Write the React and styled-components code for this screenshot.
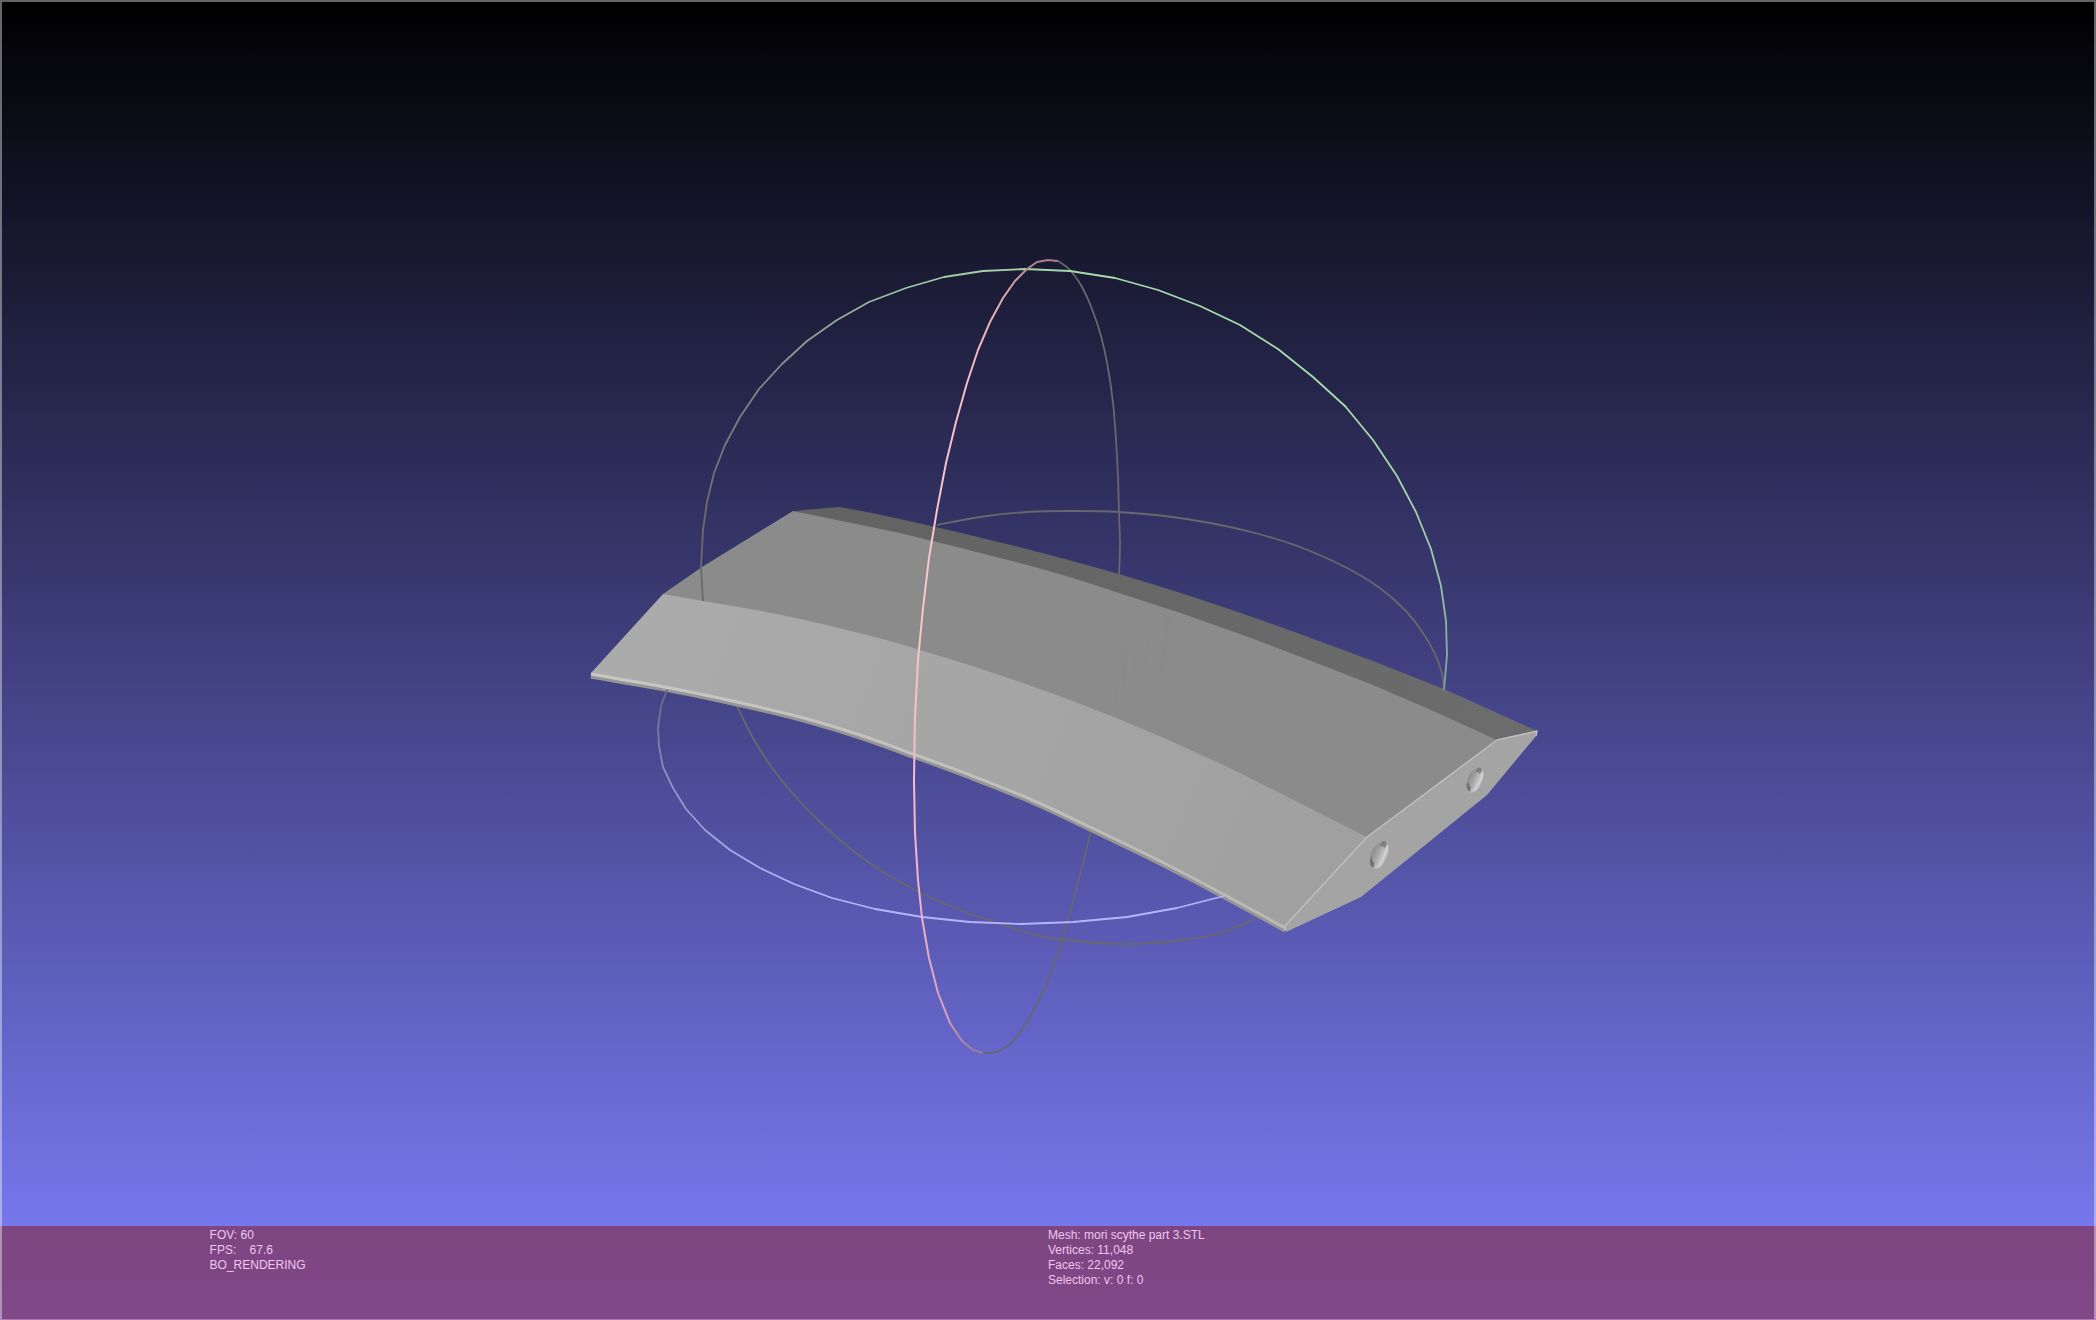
import React from 'react';
import styled, { createGlobalStyle } from 'styled-components';

const colors = {
  skyTop: '#000000',
  skyBottom: '#8080ff',
  barTop: '#7d4680',
  barBottom: '#804888',
  barText: '#f0c6f0',
  back: '#67676f',
};

const fonts = {
  sans: '"Liberation Sans", Arial, sans-serif',
};

const GlobalStyle = createGlobalStyle`
  * {
    box-sizing: border-box;
  }

  body {
    margin: 0;
    background: ${colors.skyTop};
    font-family: ${fonts.sans};
  }
`;

const Viewer = styled.main`
  position: relative;
  display: flex;
  flex-direction: column;
  min-height: 100vh;
  background: linear-gradient(${colors.skyTop}, ${colors.skyBottom});

  /* window edge, lies over the scene and the info bar */
  &::after {
    content: '';
    position: absolute;
    inset: 0;
    border: 2px solid rgba(255, 255, 255, 0.4);
    border-bottom: 1px solid rgba(255, 255, 255, 0.3);
    pointer-events: none;
  }
`;

const Scene = styled.div`
  display: flex;
  flex: 1;
  min-height: 0;
`;

const Canvas = styled.svg`
  display: block;
  flex: 1;
  width: 100%;
`;

const InfoBar = styled.footer`
  display: grid;
  grid-template-columns: 4fr 5fr;
  min-height: 94px;
  padding: 2px 0 0 10%;
  background: linear-gradient(${colors.barTop}, ${colors.barBottom});
  color: ${colors.barText};
  font-size: 12px;
  line-height: 15px;
`;

const InfoLine = styled.div`
  white-space: pre;
`;

const Line = styled.path`
  fill: none;
  stroke: ${props => props.stroke || colors.back};
  stroke-width: ${props => props.strokeWidth || 1.8};
  stroke-linejoin: round;
`;

const renderInfo = ['FOV: 60', 'FPS:    67.6', 'BO_RENDERING'];

const meshInfo = [
  'Mesh: mori scythe part 3.STL',
  'Vertices: 11,048',
  'Faces: 22,092',
  'Selection: v: 0 f: 0',
];

// smooth curve through all points (Catmull-Rom written as cubic beziers)
const smooth = points => {
  const p = points.split(' ').map(pair => pair.split(',').map(Number));
  let d = `M${p[0].join(' ')}`;
  for (let i = 0; i < p.length - 1; i++) {
    const before = p[i - 1] || p[i];
    const after = p[i + 2] || p[i + 1];
    const c1 = [0, 1].map(k => p[i][k] + (p[i + 1][k] - before[k]) / 6);
    const c2 = [0, 1].map(k => p[i + 1][k] - (after[k] - p[i][k]) / 6);
    d += ` C${c1.join(' ')} ${c2.join(' ')} ${p[i + 1].join(' ')}`;
  }
  return d;
};

const segments = points => `M${points.split(' ').join(' L')}`;

// halves of the trackball that turn away from the camera
const backRings = [
  '1058,261 1070,270 1082,287 1092,309 1101,336 1108,368 1113,403 1116,440 1118,477 1119,513 1120,545 1119,576',
  '937,525 980,517 1027,512 1073,511 1119,512 1165,516 1210,523 1255,533 1300,547 1345,567 1377,586 1402,607 1421,630 1435,654 1442,674 1444,690',
  '734,700 753,738 773,769 795,796 820,822 847,846 880,870 915,890 957,909 1000,924 1040,936 1085,942 1123,944 1153,943 1190,939 1223,932 1256,918',
  '983,1053 992,1053 1001,1050 1014,1040 1028,1020 1042,994 1053,967 1061,943 1068,920 1075,893 1083,863 1092,826',
];

const greenRing =
  '703,601 701,567 703,530 707,502 714,473 725,445 740,417 759,389 782,364 807,341 837,320 869,302 906,288 944,277 983,271 1025,269 1070,271 1115,278 1158,290 1200,306 1240,325 1278,349 1313,377 1346,407';

const greenTail = '1345,406 1373,440 1397,476 1416,512 1431,549 1441,586 1446,621 1447,655 1444,690';

const blueRing =
  '667,690 661,706 658,728 659,746 663,767 673,788 686,809 705,830 730,850 760,868 794,884 832,898 875,909 922,917 970,922 1021,924 1073,922 1127,917 1177,908 1224,896';

const redRing =
  '1058,261 1048,260 1037,262 1027,269 1015,281 1003,298 990,322 978,350 967,383 956,422 946,463 937,510 929,558 923,608 918,660 915,717 914,780 915,833 918,880 922,918 929,958 938,993 950,1023 962,1041 973,1050 983,1053';

const bladeEdge =
  '591,676 670,690 737,704 800,719 860,737 913,756 970,777 1030,801 1090,829 1160,863 1223,896 1285,930';

const bladeHighlight =
  '591,674 670,688 737,702 800,717 860,735 913,754 970,775 1030,799 1090,827 1160,861 1223,894 1285,928';

const Gradients = () => (
  <defs>
    <linearGradient id="green" gradientUnits="userSpaceOnUse" x1="701" y1="600" x2="1100" y2="270">
      <stop offset="0.1" stopColor="#6a6a6c" />
      <stop offset="0.4" stopColor="#858e8c" />
      <stop offset="0.7" stopColor="#9cc8a4" />
      <stop offset="1" stopColor="#a6dcac" />
    </linearGradient>
    <linearGradient id="greenFade" gradientUnits="userSpaceOnUse" x1="0" y1="410" x2="0" y2="690">
      <stop offset="0" stopColor="#a6dcac" />
      <stop offset="0.5" stopColor="#a0ccac" />
      <stop offset="1" stopColor="#80a09c" />
    </linearGradient>
    <linearGradient id="blue" gradientUnits="userSpaceOnUse" x1="0" y1="690" x2="0" y2="890">
      <stop offset="0" stopColor="#6a6a78" />
      <stop offset="0.4" stopColor="#8c8cbc" />
      <stop offset="1" stopColor="#b4b4ff" />
    </linearGradient>
    <linearGradient id="red" gradientUnits="userSpaceOnUse" x1="0" y1="258" x2="0" y2="1056">
      <stop offset="0" stopColor="#a47c86" />
      <stop offset="0.04" stopColor="#dca8ae" />
      <stop offset="0.15" stopColor="#f4bcc4" />
      <stop offset="0.4" stopColor="#fac8cc" />
      <stop offset="0.8" stopColor="#f4b4c8" />
      <stop offset="0.95" stopColor="#d8a0b4" />
      <stop offset="1" stopColor="#8c7c98" />
    </linearGradient>
    <linearGradient id="bevel" gradientUnits="userSpaceOnUse" x1="640" y1="620" x2="1300" y2="890">
      <stop offset="0" stopColor="#ababab" />
      <stop offset="1" stopColor="#a0a0a0" />
    </linearGradient>
    <linearGradient id="spine" gradientUnits="userSpaceOnUse" x1="800" y1="510" x2="1500" y2="735">
      <stop offset="0" stopColor="#626262" />
      <stop offset="1" stopColor="#6c6c6c" />
    </linearGradient>
    <linearGradient id="shine" gradientUnits="userSpaceOnUse" x1="591" y1="0" x2="1285" y2="0">
      <stop offset="0" stopColor="#c8c8c6" />
      <stop offset="1" stopColor="#b8b8b4" />
    </linearGradient>
    <linearGradient id="hole" x1="0" y1="0" x2="1" y2="0">
      <stop offset="0" stopColor="#8c8c8c" />
      <stop offset="0.35" stopColor="#a0a0a0" />
      <stop offset="0.65" stopColor="#bcbcbc" />
      <stop offset="0.85" stopColor="#d4d4d4" />
      <stop offset="1" stopColor="#b0b0b0" />
    </linearGradient>
  </defs>
);

const Hole = ({ x, y, size }) => (
  <g transform={`translate(${x} ${y}) rotate(24) scale(${size})`}>
    <ellipse rx="8" ry="15" fill="url(#hole)" />
    <path d="M-3 -13 Q0 -17 3 -13 L2 -8 Q0 -11 -3 -8 Z" fill="#6c6c6c" opacity="0.7" />
    <path d="M-6 9 Q-4 14 0 14 L-1 9 Q-4 9 -6 4 Z" fill="#606060" opacity="0.7" />
  </g>
);

const Blade = () => (
  <g>
    {/* top face, runs a little under the spine and the bevel */}
    <path
      d="M663 594 L702 567 L793 511 L930 533 L1119 583 L1240 625 L1373 676 L1497 740 L1367 837 L1240 783 L1119 729 L920 661 L703 611 Z"
      fill="#8b8b8b"
    />
    <path
      d="M793 511 L839 507 Q870 512 900 519 Q1010 543 1119 574 Q1210 601 1300 634 Q1372 660 1444 689 L1537 731 L1497 740 Q1435 711 1373 685 Q1307 659 1240 634 Q1180 612 1119 593 Q1060 573 1000 558 Q950 545 900 533 Z"
      fill="url(#spine)"
    />
    <path
      d="M591 673 L663 594 L703 601 Q780 613 847 630 Q885 639 920 650 Q1020 679 1119 719 Q1180 744 1240 773 L1367 837 L1285 930 L1223 896 L1090 829 L1030 801 L970 777 L913 756 L860 737 L800 719 L737 704 L670 690 L591 676 Z"
      fill="url(#bevel)"
    />
    <Line d={smooth(bladeEdge)} stroke="#959594" strokeWidth={5} />
    <Line d={smooth(bladeHighlight)} stroke="url(#shine)" strokeWidth={3} />
    <path
      d="M1285 927 L1367 837 L1497 740 L1537 731 L1536 736 L1487 795 L1361 897 L1286 932 Z"
      fill="#a4a4a4"
    />
    <Line
      stroke="#c0c0c0"
      strokeWidth={1.4}
      d="M1285 931 L1285 926 L1367 837 L1497 740 L1537 731 L1536 736"
    />
    <g opacity="0.6">
      <path d="M1132 632 L1129 690 M1121 678 L1118 712 M1152 640 L1148 672" stroke="#929292" fill="none" />
      <path d="M1169 613 L1160 672 M1124 650 L1122 690" stroke="#878787" fill="none" />
    </g>
    <Hole x={1379} y={855} size={1} />
    <Hole x={1475} y={780} size={0.9} />
  </g>
);

const App = () => (
  <Viewer>
    <GlobalStyle />
    <Scene>
      <Canvas viewBox="0 0 2096 1226" role="img" aria-label="mori scythe part 3.STL">
        <Gradients />
        {backRings.map(points => (
          <Line key={points} d={smooth(points)} />
        ))}
        <Blade />
        <Line stroke="url(#blue)" d={segments(blueRing)} />
        <Line stroke="url(#green)" d={segments(greenRing)} />
        <Line stroke="url(#greenFade)" d={segments(greenTail)} />
        <Line stroke="url(#red)" strokeWidth={2} d={segments(redRing)} />
      </Canvas>
    </Scene>
    <InfoBar>
      <div>
        {renderInfo.map(line => (
          <InfoLine key={line}>{line}</InfoLine>
        ))}
      </div>
      <div>
        {meshInfo.map(line => (
          <InfoLine key={line}>{line}</InfoLine>
        ))}
      </div>
    </InfoBar>
  </Viewer>
);

export default App;
